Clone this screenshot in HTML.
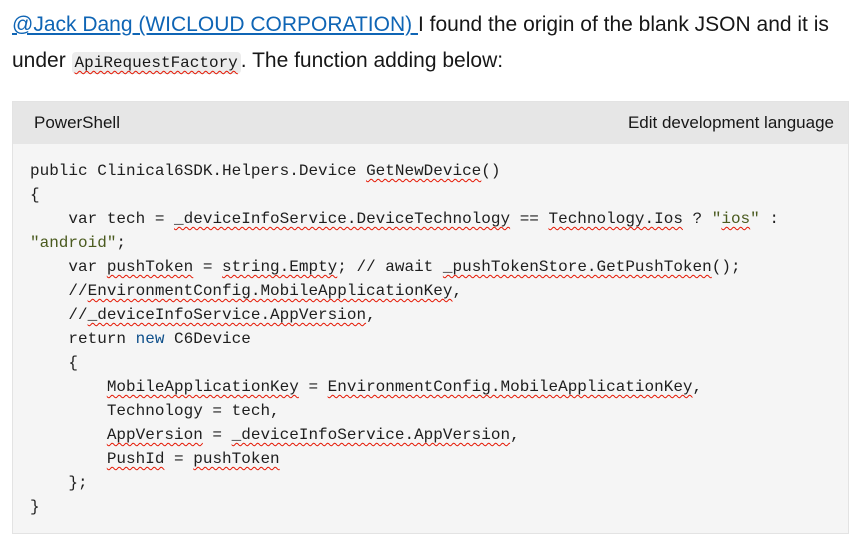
<!DOCTYPE html>
<html><head><meta charset="utf-8"><style>
body{margin:0;background:#fff;width:861px;height:544px;overflow:hidden;font-family:"Liberation Sans",sans-serif;color:#171717}
.p{position:absolute;left:12px;top:7px;font-size:21px;line-height:36px;width:845px}
.p a{color:#0f65b5;text-decoration:underline}
.ic{font-family:"Liberation Mono",monospace;font-size:16px;background:#ececec;border-radius:4px;padding:2px 3px}
.box{position:absolute;left:12px;top:101px;width:835px;height:431px;border:1px solid #e3e3e3;background:#f5f5f5}
.hd{height:42px;background:#e6e6e6;font-size:17px;line-height:42px;position:relative}
.hd .l{position:absolute;left:21px}
.hd .r{position:absolute;right:14px}
pre{margin:0;position:absolute;left:17px;top:57px;font-family:"Liberation Mono",monospace;font-size:16px;line-height:24px;color:#1e1e1e}
.w{text-decoration:underline wavy #e51400;text-decoration-thickness:1px;text-underline-offset:3px}
.k{color:#0e4f8a}.s{color:#4a5a1e}
</style></head><body>
<div class="p"><a>@Jack Dang (WICLOUD CORPORATION) </a> I found the origin of the blank JSON and it is under <span class="ic"><span class="w">ApiRequestFactory</span></span>. The function adding below:</div>
<div class="box"><div class="hd"><span class="l">PowerShell</span><span class="r">Edit development language</span></div>
<pre>public Clinical6SDK.Helpers.Device <span class="w">GetNewDevice</span>()
{
    var tech = <span class="w">_deviceInfoService.DeviceTechnology</span> == <span class="w">Technology.Ios</span> ? <span class="s">"<span class="w">ios</span>"</span> :
<span class="s">"android"</span>;
    var <span class="w">pushToken</span> = <span class="w">string.Empty</span>; // await <span class="w">_pushTokenStore.GetPushToken</span>();
    //<span class="w">EnvironmentConfig.MobileApplicationKey</span>,
    //<span class="w">_deviceInfoService.AppVersion</span>,
    return <span class="k">new</span> C6Device
    {
        <span class="w">MobileApplicationKey</span> = <span class="w">EnvironmentConfig.MobileApplicationKey</span>,
        Technology = tech,
        <span class="w">AppVersion</span> = <span class="w">_deviceInfoService.AppVersion</span>,
        <span class="w">PushId</span> = <span class="w">pushToken</span>
    };
}</pre></div>
</body></html>
